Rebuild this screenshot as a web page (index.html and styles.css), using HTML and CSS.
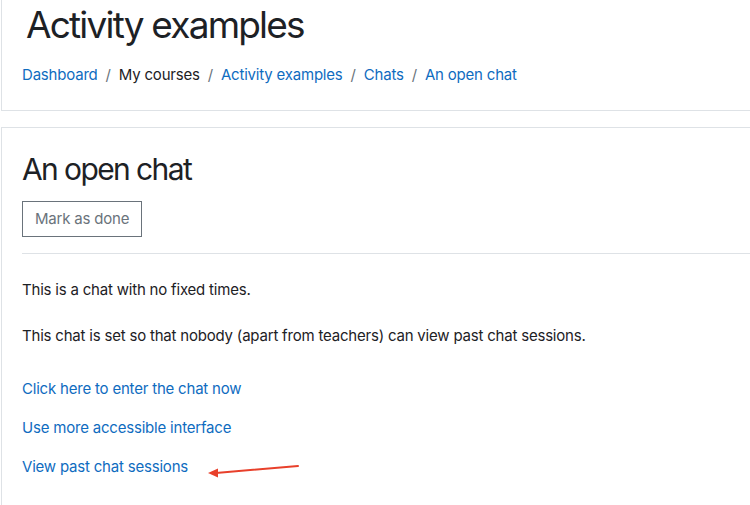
FILE: index.html
```html
<!DOCTYPE html>
<html lang="en">
<head>
<meta charset="utf-8">
<title>An open chat</title>
<link rel="stylesheet" href="styles.css">
</head>
<body>
<div class="page">
  <header class="card header-card">
    <h1 class="page-title">Activity examples</h1>
    <nav class="breadcrumb" aria-label="Navigation bar">
      <a href="#">Dashboard</a>
      <span class="sep">/</span>
      <span class="current">My courses</span>
      <span class="sep">/</span>
      <a href="#">Activity examples</a>
      <span class="sep">/</span>
      <a href="#">Chats</a>
      <span class="sep">/</span>
      <a href="#">An open chat</a>
    </nav>
  </header>

  <main class="card main-card">
    <h2 class="activity-title">An open chat</h2>
    <div class="completion">
      <button class="btn-outline" type="button">Mark as done</button>
    </div>
    <hr class="divider">
    <div class="intro">
      <p>This is a chat with no fixed times.</p>
      <p>This chat is set so that nobody (apart from teachers) can view past chat sessions.</p>
    </div>
    <ul class="links">
      <li><a href="#">Click here to enter the chat now</a></li>
      <li><a href="#">Use more accessible interface</a></li>
      <li class="with-arrow">
        <a href="#">View past chat sessions</a>
        <svg class="arrow" width="94" height="16" viewBox="0 0 94 16" aria-hidden="true">
          <line x1="90" y1="2" x2="8" y2="9" stroke="#e8402b" stroke-width="2" stroke-linecap="round"/>
          <polygon points="0,9 10,4.5 10,13.5" fill="#e8402b"/>
        </svg>
      </li>
    </ul>
  </main>
</div>
</body>
</html>
```
FILE: styles.css
```css
html, body {
  margin: 0;
  padding: 0;
  overflow: hidden;
  background: #ffffff;
}

body {
  font-family: Inter, "Helvetica Neue", Arial, sans-serif;
  font-size: 15px;
  line-height: 1.5;
  letter-spacing: -0.2px;
  color: #1d2125;
}

.page {
  width: 800px;
  padding-left: 1px;
  display: flex;
  flex-direction: column;
  gap: 16px;
}

.card {
  border: 1px solid #dee2e6;
  background: #fff;
}

.header-card {
  border-top: none;
  padding: 3px 20px 23px 20px;
  display: flex;
  flex-direction: column;
  gap: 17px;
}

.page-title {
  margin: 0 0 0 4px;
  font-size: 37px;
  font-weight: 400;
  line-height: 1.2;
  letter-spacing: -1.8px;
  color: #1d2125;
}

.breadcrumb {
  display: flex;
  align-items: center;
  gap: 8px;
}

.breadcrumb a {
  color: #0f6cbf;
  text-decoration: none;
}

.breadcrumb .sep {
  color: #6a737b;
}

.breadcrumb .current {
  color: #1d2125;
}

.main-card {
  padding: 23px 20px 60px 20px;
  display: flex;
  flex-direction: column;
}

.activity-title {
  margin: 0;
  font-size: 30px;
  font-weight: 400;
  line-height: 1.2;
  letter-spacing: -1.6px;
}

.completion {
  margin-top: 14px;
}

.btn-outline {
  font-family: inherit;
  font-size: 15px;
  line-height: 22.5px;
  letter-spacing: -0.2px;
  color: #6a737b;
  background: #fff;
  border: 1px solid #6a737b;
  border-radius: 0;
  padding: 6px 12px;
}

.divider {
  margin: 16px -20px 0 0;
  border: 0;
  border-top: 1px solid #dee2e6;
}

.intro {
  margin-top: 25px;
  display: flex;
  flex-direction: column;
  gap: 23.5px;
}

.intro p {
  margin: 0;
}

.links {
  list-style: none;
  margin: 30.5px 0 0 0;
  padding: 0;
  display: flex;
  flex-direction: column;
  gap: 16.5px;
}

.links a {
  color: #0f6cbf;
  text-decoration: none;
}

.with-arrow {
  position: relative;
}

.arrow {
  position: absolute;
  left: 186px;
  top: 8px;
}
```
